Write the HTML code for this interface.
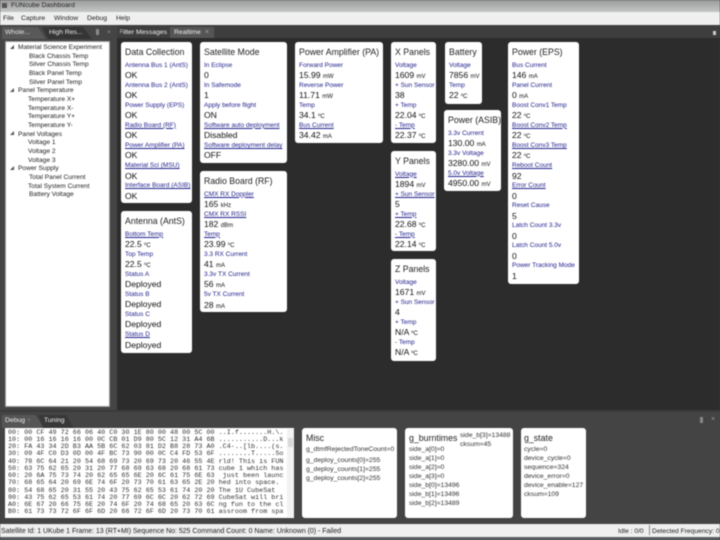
<!DOCTYPE html>
<html><head><meta charset="utf-8"><style>
*{box-sizing:border-box}
html,body{margin:0;padding:0}
body{width:720px;height:540px;position:relative;overflow:hidden;background:#444;font-family:"Liberation Sans",sans-serif}
#w{position:absolute;left:0;top:0;width:720px;height:540px;overflow:hidden;filter:blur(.4px)}
.a{position:absolute;white-space:nowrap}
.c{position:absolute;background:#fff;border-radius:3px;padding:5px 0 0 4px;overflow:hidden;white-space:nowrap}
.c h4{margin:0 0 3px;font-weight:400;font-size:8.75px;line-height:10px;color:#222}
.c i{display:block;position:relative;top:.5px;font-style:normal;font-size:6.5px;line-height:10.05px;height:10.05px;color:#22228c}
.c i.u{text-decoration:underline}
.c b{display:block;font-weight:400;font-size:8.6px;line-height:10.05px;height:10.05px;color:#111}
.c b small{font-size:6px}
.t{position:absolute;font-size:6.6px;line-height:9px;color:#222;white-space:nowrap}
.g{position:absolute;background:#fff;border-radius:3px}
.g div{position:absolute;font-size:6.8px;line-height:9px;color:#333;white-space:nowrap}
.g div.h{font-size:8.8px;line-height:11px;color:#222}
</style></head><body><div id="w">
<!-- title bar -->
<div class="a" style="left:0;top:0;width:720px;height:12px;background:linear-gradient(#9a9a9a,#c4c6c6)"></div>
<div class="a" style="left:11px;top:1px;font-size:6.8px;line-height:10px;color:#222">FUNcube Dashboard</div>
<div class="a" style="left:2px;top:3px;width:5px;height:5px;background:#555"></div>
<!-- menu -->
<div class="a" style="left:0;top:12px;width:720px;height:13px;background:#efefef"></div>
<div class="a" style="left:3px;top:13.5px;font-size:6.8px;line-height:10px;color:#222">File</div>
<div class="a" style="left:21px;top:13.5px;font-size:6.8px;line-height:10px;color:#222">Capture</div>
<div class="a" style="left:54px;top:13.5px;font-size:6.8px;line-height:10px;color:#222">Window</div>
<div class="a" style="left:87px;top:13.5px;font-size:6.8px;line-height:10px;color:#222">Debug</div>
<div class="a" style="left:116px;top:13.5px;font-size:6.8px;line-height:10px;color:#222">Help</div>
<!-- left dock -->
<div class="a" style="left:0;top:25px;width:117px;height:386px;background:#454545"></div>
<div class="a" style="left:2px;top:27px;width:44px;height:12px;background:#595959;clip-path:polygon(0 0,82% 0,100% 100%,0 100%)"></div>
<div class="a" style="left:42px;top:27px;width:50px;height:12px;background:#353535;clip-path:polygon(0 0,82% 0,100% 100%,12% 100%)"></div>
<div class="a" style="left:5px;top:28px;font-size:6.8px;line-height:9px;color:#e4e4e4">Whole...</div>
<div class="a" style="left:49px;top:28px;font-size:6.8px;line-height:9px;color:#e8e8e8">High Res...</div>
<div class="a" style="left:96px;top:29px;width:3px;height:6px;background:#8a8a8a"></div>
<div class="a" style="left:107px;top:28px;font-size:6.5px;line-height:9px;color:#999">×</div>
<div class="a" style="left:5px;top:41px;width:105px;height:366px;background:#fff;border:1px solid #9a9a9a"></div>
<div class="t" style="left:18px;top:42.5px">Material Science Experiment</div>
<div class="t" style="left:29px;top:51.5px">Black Chassis Temp</div>
<div class="t" style="left:29px;top:60px">Silver Chassis Temp</div>
<div class="t" style="left:29px;top:69px">Black Panel Temp</div>
<div class="t" style="left:29px;top:77.5px">Silver Panel Temp</div>
<div class="t" style="left:18px;top:86px">Panel Temperature</div>
<div class="t" style="left:28px;top:95px">Temperature X+</div>
<div class="t" style="left:28px;top:103.5px">Temperature X-</div>
<div class="t" style="left:28px;top:112px">Temperature Y+</div>
<div class="t" style="left:28px;top:121px">Temperature Y-</div>
<div class="t" style="left:18px;top:129.5px">Panel Voltages</div>
<div class="t" style="left:28px;top:138px">Voltage 1</div>
<div class="t" style="left:28px;top:147px">Voltage 2</div>
<div class="t" style="left:28px;top:155.5px">Voltage 3</div>
<div class="t" style="left:18px;top:164px">Power Supply</div>
<div class="t" style="left:29px;top:173px">Total Panel Current</div>
<div class="t" style="left:28px;top:181.5px">Total System Current</div>
<div class="t" style="left:29px;top:190px">Battery Voltage</div>
<svg class="a" style="left:9px;top:44px" width="6" height="130"><path fill="#555" d="M5 1v4h-4zM5 44v4h-4zM5 87v4h-4zM5 122v4h-4z"/></svg>
<!-- main area -->
<div class="a" style="left:117px;top:25px;width:603px;height:385px;background:#2c2c2c"></div>
<div class="a" style="left:117px;top:25px;width:603px;height:13px;background:#3e3e3e"></div>
<div class="a" style="left:170px;top:27px;width:44px;height:11px;background:#555"></div>
<div class="a" style="left:120px;top:28px;width:48px;overflow:hidden;font-size:6.8px;line-height:10px;color:#eee"><span style="margin-left:-1px">Filter Messages</span></div>
<div class="a" style="left:174px;top:28px;font-size:6.8px;line-height:10px;color:#eee">Realtime</div>
<div class="a" style="left:205px;top:28px;font-size:7px;line-height:10px;color:#aaa">×</div>
<div class="a" style="left:713px;top:31px;width:3px;height:4px;background:#ccc"></div>

<div class="c" style="left:121px;top:42px;width:71px;height:161px"><h4>Data Collection</h4>
<i>Antenna Bus 1 (AntS)</i><b>OK</b><i>Antenna Bus 2 (AntS)</i><b>OK</b><i>Power Supply (EPS)</i><b>OK</b><i class="u">Radio Board (RF)</i><b>OK</b><i class="u">Power Amplifier (PA)</i><b>OK</b><i class="u">Material Sci (MSU)</i><b>OK</b><i class="u">Interface Board (ASIB)</i><b>OK</b></div>

<div class="c" style="left:121px;top:211px;width:71px;height:142px"><h4>Antenna (AntS)</h4>
<i class="u">Bottom Temp</i><b>22.5 <small>ºC</small></b><i>Top Temp</i><b>22.5 <small>ºC</small></b><i>Status A</i><b>Deployed</b><i>Status B</i><b>Deployed</b><i>Status C</i><b>Deployed</b><i class="u">Status D</i><b>Deployed</b></div>

<div class="c" style="left:200px;top:42px;width:87px;height:121px"><h4>Satellite Mode</h4>
<i>In Eclipse</i><b>0</b><i>In Safemode</i><b>1</b><i>Apply before flight</i><b>ON</b><i class="u">Software auto deployment</i><b>Disabled</b><i class="u">Software deployment delay</i><b>OFF</b></div>

<div class="c" style="left:200px;top:171px;width:87px;height:141px"><h4>Radio Board (RF)</h4>
<i class="u">CMX RX Doppler</i><b>165 <small>kHz</small></b><i class="u">CMX RX RSSI</i><b>182 <small>dBm</small></b><i class="u">Temp</i><b>23.99 <small>ºC</small></b><i>3.3 RX Current</i><b>41 <small>mA</small></b><i>3.3v TX Current</i><b>56 <small>mA</small></b><i>5v TX Current</i><b>28 <small>mA</small></b></div>

<div class="c" style="left:295px;top:42px;width:88px;height:101px"><h4>Power Amplifier (PA)</h4>
<i>Forward Power</i><b>15.99 <small>mW</small></b><i>Reverse Power</i><b>11.71 <small>mW</small></b><i>Temp</i><b>34.1 <small>ºC</small></b><i class="u">Bus Current</i><b>34.42 <small>mA</small></b></div>

<div class="c" style="left:391px;top:42px;width:45px;height:101px"><h4>X Panels</h4>
<i>Voltage</i><b>1609 <small>mV</small></b><i>+ Sun Sensor</i><b>38</b><i>+ Temp</i><b>22.04 <small>ºC</small></b><i class="u">- Temp</i><b>22.37 <small>ºC</small></b></div>

<div class="c" style="left:391px;top:151px;width:45px;height:100px"><h4>Y Panels</h4>
<i class="u">Voltage</i><b>1894 <small>mV</small></b><i class="u">+ Sun Sensor</i><b>5</b><i class="u">+ Temp</i><b>22.68 <small>ºC</small></b><i class="u">- Temp</i><b>22.14 <small>ºC</small></b></div>

<div class="c" style="left:391px;top:259px;width:45px;height:102px"><h4>Z Panels</h4>
<i>Voltage</i><b>1671 <small>mV</small></b><i>+ Sun Sensor</i><b>4</b><i>+ Temp</i><b>N/A <small>ºC</small></b><i>- Temp</i><b>N/A <small>ºC</small></b></div>

<div class="c" style="left:445px;top:42px;width:37px;height:62px"><h4>Battery</h4>
<i>Voltage</i><b>7856 <small>mV</small></b><i>Temp</i><b>22 <small>ºC</small></b></div>

<div class="c" style="left:444px;top:110px;width:57px;height:81px"><h4>Power (ASIB)</h4>
<i>3.3v Current</i><b>130.00 <small>mA</small></b><i>3.3v Voltage</i><b>3280.00 <small>mV</small></b><i class="u">5.0v Voltage</i><b>4950.00 <small>mV</small></b></div>

<div class="c" style="left:508px;top:42px;width:71px;height:242px"><h4>Power (EPS)</h4>
<i>Bus Current</i><b>146 <small>mA</small></b><i>Panel Current</i><b>0 <small>mA</small></b><i>Boost Conv1 Temp</i><b>22 <small>ºC</small></b><i class="u">Boost Conv2 Temp</i><b>22 <small>ºC</small></b><i class="u">Boost Conv3 Temp</i><b>22 <small>ºC</small></b><i class="u">Reboot Count</i><b>92</b><i class="u">Error Count</i><b>0</b><i>Reset Cause</i><b>5</b><i>Latch Count 3.3v</i><b>0</b><i>Latch Count 5.0v</i><b>0</b><i>Power Tracking Mode</i><b>1</b></div>

<!-- bottom dock -->
<div class="a" style="left:0;top:411px;width:720px;height:113px;background:#444"></div>
<div class="a" style="left:0;top:410px;width:720px;height:2px;background:#3a3a3a"></div>
<div class="a" style="left:2px;top:415px;width:42px;height:13px;background:#555;clip-path:polygon(0 0,80% 0,100% 100%,0 100%)"></div>
<div class="a" style="left:38px;top:415px;width:36px;height:13px;background:#383838;clip-path:polygon(0 0,78% 0,100% 100%,14% 100%)"></div>
<div class="a" style="left:5px;top:416px;font-size:6.8px;line-height:10px;color:#eee">Debug</div>
<div class="a" style="left:44px;top:416px;font-size:6.8px;line-height:10px;color:#eee">Tuning</div>
<div class="a" style="left:27px;top:416px;font-size:6.5px;line-height:9px;color:#888">×</div>
<div class="a" style="left:700px;top:417px;width:3px;height:6px;background:#888"></div>
<div class="a" style="left:711px;top:415px;font-size:7px;line-height:9px;color:#999">×</div>

<div class="a" style="left:5px;top:428px;width:289px;height:90px;background:#fff;overflow:hidden">
<pre style="position:absolute;left:3px;top:1.5px;margin:0;white-space:pre;font:6.75px/7.27px 'Liberation Mono',monospace;color:#333">00: 00 CF 49 72 66 06 40 C0 30 1E 80 00 48 00 5C 00 ..I.f.......H.\.
10: 00 16 16 16 16 00 0C CB 01 D9 80 5C 12 31 A4 6B ...........D...k
20: FA 43 34 2D B3 AA 5B 6C 62 03 81 D2 B8 28 73 A0 .C4-..[lb....(s.
30: 09 4F C0 D3 0D 00 4F BC 73 90 00 0C C4 FD 53 6F ........T.....So
40: 78 6C 64 21 20 54 68 69 73 20 69 73 20 46 55 4E rld! This is FUN
50: 63 75 62 65 20 31 20 77 68 69 63 68 20 68 61 73 cube 1 which has
60: 20 6A 75 73 74 20 62 65 65 6E 20 6C 61 75 6E 63  just been launc
70: 68 65 64 20 69 6E 74 6F 20 73 70 61 63 65 2E 20 hed into space. 
80: 54 68 65 20 31 55 20 43 75 62 65 53 61 74 20 20 The 1U CubeSat  
90: 43 75 62 65 53 61 74 20 77 69 6C 6C 20 62 72 69 CubeSat will bri
A0: 6E 67 20 66 75 6E 20 74 6F 20 74 68 65 20 63 6C ng fun to the cl
B0: 61 73 73 72 6F 6F 6D 20 66 72 6F 6D 20 73 70 61 assroom from spa</pre>
</div>
<div class="a" style="left:287px;top:429px;width:7px;height:88px;background:#f2f2f2"></div>
<div class="a" style="left:288px;top:438px;width:5px;height:9px;background:#d8d8d8"></div>

<div class="g" style="left:302px;top:428px;width:95px;height:90px">
<div class="h" style="left:4px;top:5px">Misc</div>
<div style="left:4px;top:17px">g_dtmfRejectedToneCount=0</div>
<div style="left:4px;top:28px">g_deploy_counts[0]=255</div>
<div style="left:4px;top:37px">g_deploy_counts[1]=255</div>
<div style="left:4px;top:46px">g_deploy_counts[2]=255</div>
</div>
<div class="g" style="left:405px;top:428px;width:108px;height:90px">
<div class="h" style="left:4px;top:5px">g_burntimes</div>
<div style="left:4px;top:17px">side_a[0]=0</div>
<div style="left:4px;top:26px">side_a[1]=0</div>
<div style="left:4px;top:35px">side_a[2]=0</div>
<div style="left:4px;top:44px">side_a[3]=0</div>
<div style="left:4px;top:53px">side_b[0]=13496</div>
<div style="left:4px;top:62px">side_b[1]=13496</div>
<div style="left:4px;top:71px">side_b[2]=13489</div>
<div style="left:55px;top:3px">side_b[3]=13488</div>
<div style="left:55px;top:12px">cksum=45</div>
</div>
<div class="g" style="left:521px;top:428px;width:65px;height:90px">
<div class="h" style="left:3px;top:5px">g_state</div>
<div style="left:3px;top:17px">cycle=0</div>
<div style="left:3px;top:26px">device_cycle=0</div>
<div style="left:3px;top:35px">sequence=324</div>
<div style="left:3px;top:44px">device_error=0</div>
<div style="left:3px;top:53px">device_enable=127</div>
<div style="left:3px;top:62px">cksum=109</div>
</div>

<!-- status bar -->
<div class="a" style="left:0;top:524px;width:720px;height:13px;background:#efefef"></div>
<div class="a" style="left:1px;top:526.5px;font-size:6.95px;line-height:10px;color:#222">Satellite Id: 1 UKube 1 Frame: 13 (RT+MI) Sequence No: 525 Command Count: 0 Name: Unknown (0) - Failed</div>
<div class="a" style="left:618px;top:526.5px;font-size:6.7px;line-height:10px;color:#222">Idle : 0/0</div>
<div class="a" style="left:649px;top:525px;width:1px;height:10px;background:#888"></div>
<div class="a" style="left:652px;top:526.5px;font-size:6.7px;line-height:10px;color:#222">Detected Frequency: 0</div>
<div class="a" style="left:0;top:537px;width:720px;height:3px;background:#5a5f63"></div>
</div></body></html>
